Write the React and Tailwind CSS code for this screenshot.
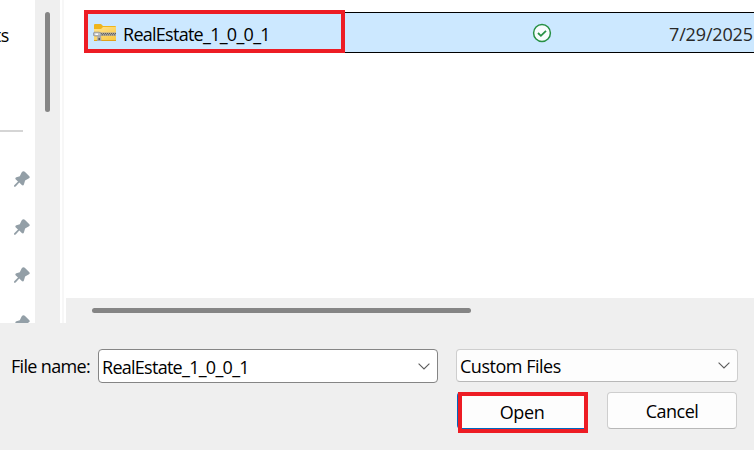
import React from "react";

const Pin = () => (
  <svg className="block h-4 w-4 shrink-0" viewBox="0 0 16 16" fill="#939fa7">
    <path d="M7.6 1.4Q9.2-.6 10.8.7L15.3 5.2Q16.3 6.4 15 7.3L11.1 9.6 9.9 13.4Q9.2 15.2 7.8 14L5.3 11.6 1.7 15.6.3 16 0 14.5 4 10.5 1.6 8.2Q.8 6.9 2.4 6.3L5.8 5.2Z" />
  </svg>
);

const Chevron = () => (
  <svg className="h-[7px] w-3 shrink-0" viewBox="0 0 12 7" fill="none" stroke="#5c5c5c" strokeWidth="1.1">
    <path d="M.6.7 6 6 11.4.7" />
  </svg>
);

const ZipFolder = () => (
  <svg className="mt-[3px] h-[18px] w-[23px] shrink-0" viewBox="0 0 23 18">
    <defs>
      <linearGradient id="folder" x1="0" y1="0" x2="1" y2="1">
        <stop offset="0" stopColor="#ffe391" />
        <stop offset="1" stopColor="#f9c840" />
      </linearGradient>
    </defs>
    <path d="M1 1Q1 0 2 0H8L10 2H22Q23 2 23 3V16Q23 17 22 17H2Q1 17 1 16Z" fill="#efb51c" />
    <path d="M1 5H8L10 3H23V16H1Z" fill="url(#folder)" />
    <path d="M1 16H23V17H1Z" fill="#dfa21d" />
    <path d="M7 8.5H23V11.8H7Z" fill="#a8a49a" />
    <path d="M8 9.5H23M9 10.8H23" stroke="#5f5e5b" strokeWidth="1" strokeDasharray="1 1" />
    <path d="M1 8.2H6L8 9V12H2L0 11Z" fill="#bfc1c3" stroke="#85898c" strokeWidth=".7" />
    <path d="M2.3 9.5H5V11H2.3Z" fill="#fff" />
    <path d="M4.5 11.5H8L8.5 17H4Z" fill="#aaa" />
    <path d="M5.5 14H7V16H5.5Z" fill="#555" />
  </svg>
);

export default function App() {
  return (
    <div className="flex h-[450px] w-[754px] flex-col overflow-hidden bg-[#efefef] text-lg leading-6 text-black [font-family:'Open_Sans','Noto_Sans',sans-serif]">
      <div className="flex h-[323px] shrink-0">
        <aside className="flex w-[35px] flex-col overflow-hidden bg-white">
          <div className="flex h-[130px] shrink-0 justify-end pr-[26px] pt-[23px]">
            <span className="tracking-[-0.4px]">ts</span>
          </div>
          <div className="h-0.5 w-[23px] shrink-0 bg-[#d5d5d5]" />
          <div className="flex flex-col gap-8 pl-3.5 pt-[39px]">
            <Pin />
            <Pin />
            <Pin />
            <Pin />
          </div>
        </aside>
        <div className="w-[25px] bg-[#efefef] pl-2.5 pt-3">
          <div className="h-[100px] w-[5px] rounded-full bg-[#858585]" />
        </div>
        <div className="w-1.5 border-x-2 border-white bg-[#f7f7f7]" />
        <main className="flex w-[688px] flex-col bg-white">
          <div className="h-[298px] pl-[18px] pt-2.5">
            <div className="flex h-[43px]">
              <div className="flex w-[261px] items-center border-4 border-[#ed1c24] bg-[#cce8ff] pl-[5px]">
                <ZipFolder />
                <span className="ml-[7px] mt-1 whitespace-nowrap tracking-[-0.73px]">RealEstate_1_0_0_1</span>
              </div>
              <div className="mt-0.5 flex w-[409px] items-center overflow-hidden border-y border-black bg-[#cce8ff] pl-[187px]">
                <svg className="h-5 w-5 shrink-0" viewBox="0 0 20 20" fill="none">
                  <circle cx="10" cy="10" r="8.4" fill="#f8fcfd" stroke="#279044" strokeWidth="1.5" />
                  <path d="M6 10 8.9 12.8 14 7.8" stroke="#279044" strokeWidth="1.8" />
                </svg>
                <span className="ml-[117px] mt-0.5 whitespace-nowrap tracking-[-0.15px] text-[#282828]">7/29/2025</span>
              </div>
            </div>
          </div>
          <div className="h-[25px] bg-[#efefef] pl-[26px] pt-2.5">
            <div className="h-[5px] w-[379px] rounded-full bg-[#858585]" />
          </div>
        </main>
      </div>
      <div className="flex h-[60px] shrink-0 items-start pl-[11px] pt-[26px]">
        <label className="mt-[5px] w-[87px] whitespace-nowrap tracking-[-0.67px]">File name:</label>
        <div className="flex h-[34px] w-[340px] items-center justify-between rounded-sm border border-[#858585] bg-white pl-[3px] pr-[7px]">
          <span className="mt-0.5 tracking-[-0.73px]">RealEstate_1_0_0_1</span>
          <Chevron />
        </div>
        <div className="ml-[18px] flex h-[33px] w-[282px] items-center justify-between rounded-sm border border-[#cecece] border-b-[#b8b8b8] bg-[#fdfdfd] pl-[3px] pr-[7px]">
          <span className="mt-px tracking-[-0.48px]">Custom Files</span>
          <Chevron />
        </div>
      </div>
      <div className="flex pl-[457px] pt-[9px]">
        <div className="h-[37px] w-[131px] rounded border-l border-[#0067c0]">
          <button className="flex h-[41px] w-[130px] items-start justify-center border-4 border-[#ed1c24] bg-[#ed1c24]">
            <span className="flex h-[33px] w-full items-center justify-center border-b border-[#0067c0] bg-[#fdfdfd] pr-0.5 tracking-[-0.4px]">Open</span>
          </button>
        </div>
        <button className="ml-[19px] h-[37px] w-[130px] rounded border border-[#cecece] border-b-[#b8b8b8] bg-[#fdfdfd] tracking-[-0.5px]">Cancel</button>
      </div>
    </div>
  );
}
